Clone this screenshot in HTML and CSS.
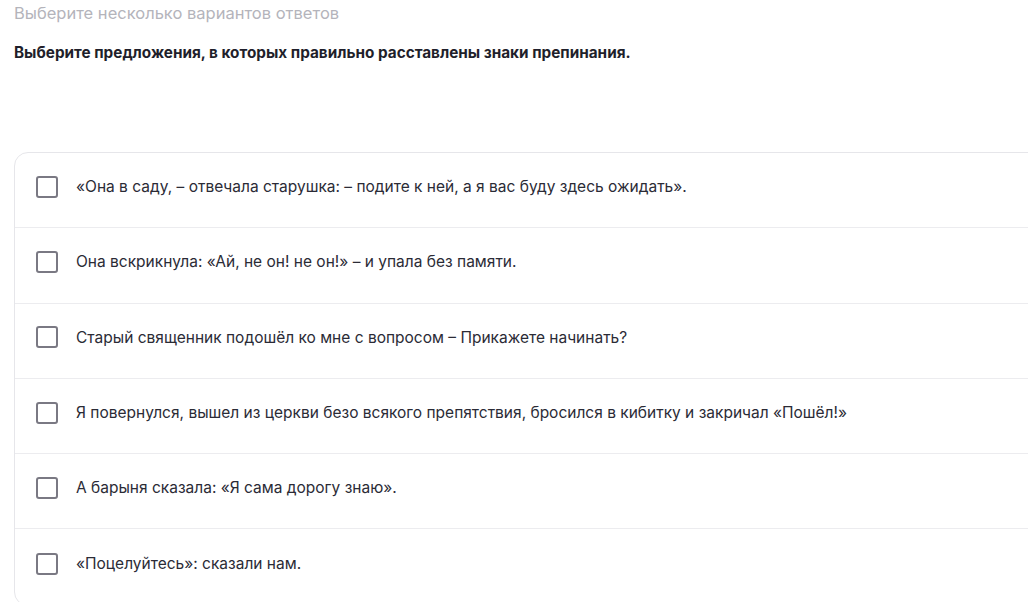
FILE: index.html
```html
<!DOCTYPE html>
<html lang="ru">
<head>
<meta charset="utf-8">
<link rel="stylesheet" href="styles.css">
</head>
<body>
<div class="page">
  <div class="hint">Выберите несколько вариантов ответов</div>
  <div class="question">Выберите предложения, в которых правильно расставлены знаки препинания.</div>
  <div class="card">
    <label class="option"><span class="box"></span><span class="text">«Она в саду, – отвечала старушка: – подите к ней, а я вас буду здесь ожидать».</span></label>
    <label class="option"><span class="box"></span><span class="text">Она вскрикнула: «Ай, не он! не он!» – и упала без памяти.</span></label>
    <label class="option"><span class="box"></span><span class="text">Старый священник подошёл ко мне с вопросом – Прикажете начинать?</span></label>
    <label class="option"><span class="box"></span><span class="text">Я повернулся, вышел из церкви безо всякого препятствия, бросился в кибитку и закричал «Пошёл!»</span></label>
    <label class="option"><span class="box"></span><span class="text">А барыня сказала: «Я сама дорогу знаю».</span></label>
    <label class="option"><span class="box"></span><span class="text">«Поцелуйтесь»: сказали нам.</span></label>
  </div>
</div>
</body>
</html>
```
FILE: styles.css
```css
html, body {
  margin: 0;
  padding: 0;
  background: #ffffff;
  overflow: hidden;
}
body {
  font-family: Inter, "Noto Sans", sans-serif;
  width: 1028px;
  height: 602px;
}
.page {
  width: 1028px;
  height: 602px;
  overflow: hidden;
  padding: 3px 0 0 14px;
  box-sizing: border-box;
}
.hint {
  font-size: 16.5px;
  line-height: 20px;
  color: #b4b4bb;
}
.question {
  margin-top: 20px;
  font-size: 15.3px;
  line-height: 19px;
  font-weight: 700;
  color: #1f1f2b;
}
.card {
  margin-top: 90px;
  width: 1100px;
  border: 1px solid #e6e6ea;
  border-radius: 14px;
  display: flex;
  flex-direction: column;
}
.option {
  display: flex;
  align-items: center;
  gap: 18px;
  height: 75.3px;
  padding: 0 0 7px 21px;
  border-bottom: 1px solid #ececef;
  box-sizing: border-box;
}
.option:last-child {
  border-bottom: none;
}
.box {
  width: 22px;
  height: 22px;
  box-sizing: border-box;
  border: 2.5px solid #7a7983;
  border-radius: 3px;
  flex: none;
}
.text {
  font-size: 15.5px;
  color: #2b2b36;
}
```
